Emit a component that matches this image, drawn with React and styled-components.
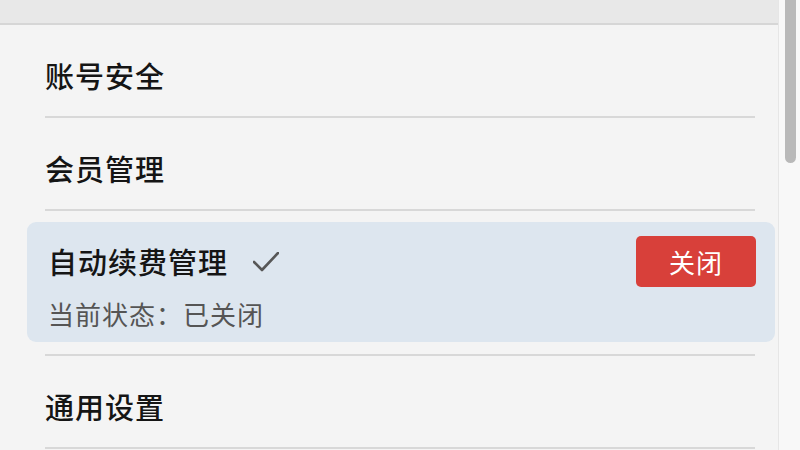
import styled, { createGlobalStyle } from "styled-components";

const GlobalStyle = createGlobalStyle`
  html, body {
    margin: 0;
    padding: 0;
    width: 800px;
    height: 450px;
    overflow: hidden;
    background: #f4f4f4;
  }
  body {
    font-family: "Noto Sans CJK SC", "Noto Sans", sans-serif;
  }
`;

const Page = styled.div`
  display: flex;
  width: 800px;
  height: 450px;
  overflow: hidden;
`;

const Panel = styled.div`
  flex: 1;
  display: flex;
  flex-direction: column;
  background: #f4f4f4;
  border-right: 1px solid #e6e6e6;
`;

const Header = styled.div`
  height: 23px;
  flex-shrink: 0;
  background: #e8e8e8;
  border-bottom: 2px solid #d6d6d6;
`;

const List = styled.div`
  display: flex;
  flex-direction: column;
  padding: 0 23px 0 45px;
`;

const Row = styled.div`
  padding: 33px 0 23px;
  border-bottom: 2px solid #d8d8d8;
`;

const Title = styled.span`
  font-size: 29px;
  line-height: 35px;
  font-weight: 500;
  color: #151515;
  letter-spacing: 1px;
`;

const CardWrap = styled.div`
  padding: 11px 0 12px;
  border-bottom: 2px solid #d8d8d8;
`;

const Card = styled.div`
  margin: 0 -20px 0 -18px;
  padding: 14px 19px 12px 21px;
  background: #dde6ef;
  border-radius: 9px;
`;

const CardTop = styled.div`
  display: flex;
  align-items: center;
  justify-content: space-between;
`;

const TitleGroup = styled.div`
  display: flex;
  align-items: center;
  gap: 25px;
`;

const Status = styled.div`
  margin-top: 11px;
  font-size: 26px;
  line-height: 32px;
  color: #555555;
  letter-spacing: 1px;
`;

const Button = styled.button`
  width: 120px;
  height: 51px;
  border: none;
  border-radius: 5px;
  background: #d8403a;
  color: #ffffff;
  font-family: "Noto Sans CJK SC", "Noto Sans", sans-serif;
  font-size: 26px;
  letter-spacing: 1px;
  padding: 0;
  cursor: pointer;
`;

const ScrollTrack = styled.div`
  width: 21px;
  flex-shrink: 0;
  background: #f8f8f8;
  padding-left: 6px;
  box-sizing: border-box;
`;

const Thumb = styled.div`
  width: 11px;
  height: 163px;
  background: #b9b9b9;
  border-radius: 0 0 6px 6px;
`;

const Check = () => (
  <svg width="26" height="20" viewBox="0 0 26 20" fill="none">
    <path d="M1 10 L9 18 L25 1" stroke="#575757" strokeWidth="2.6" strokeLinecap="round" strokeLinejoin="round" />
  </svg>
);

export default function App() {
  return (
    <>
      <GlobalStyle />
      <Page>
        <Panel>
          <Header />
          <List>
            <Row>
              <Title>账号安全</Title>
            </Row>
            <Row>
              <Title>会员管理</Title>
            </Row>
            <CardWrap>
              <Card>
                <CardTop>
                  <TitleGroup>
                    <Title>自动续费管理</Title>
                    <Check />
                  </TitleGroup>
                  <Button>关闭</Button>
                </CardTop>
                <Status>当前状态：已关闭</Status>
              </Card>
            </CardWrap>
            <Row>
              <Title>通用设置</Title>
            </Row>
          </List>
        </Panel>
        <ScrollTrack>
          <Thumb />
        </ScrollTrack>
      </Page>
    </>
  );
}
